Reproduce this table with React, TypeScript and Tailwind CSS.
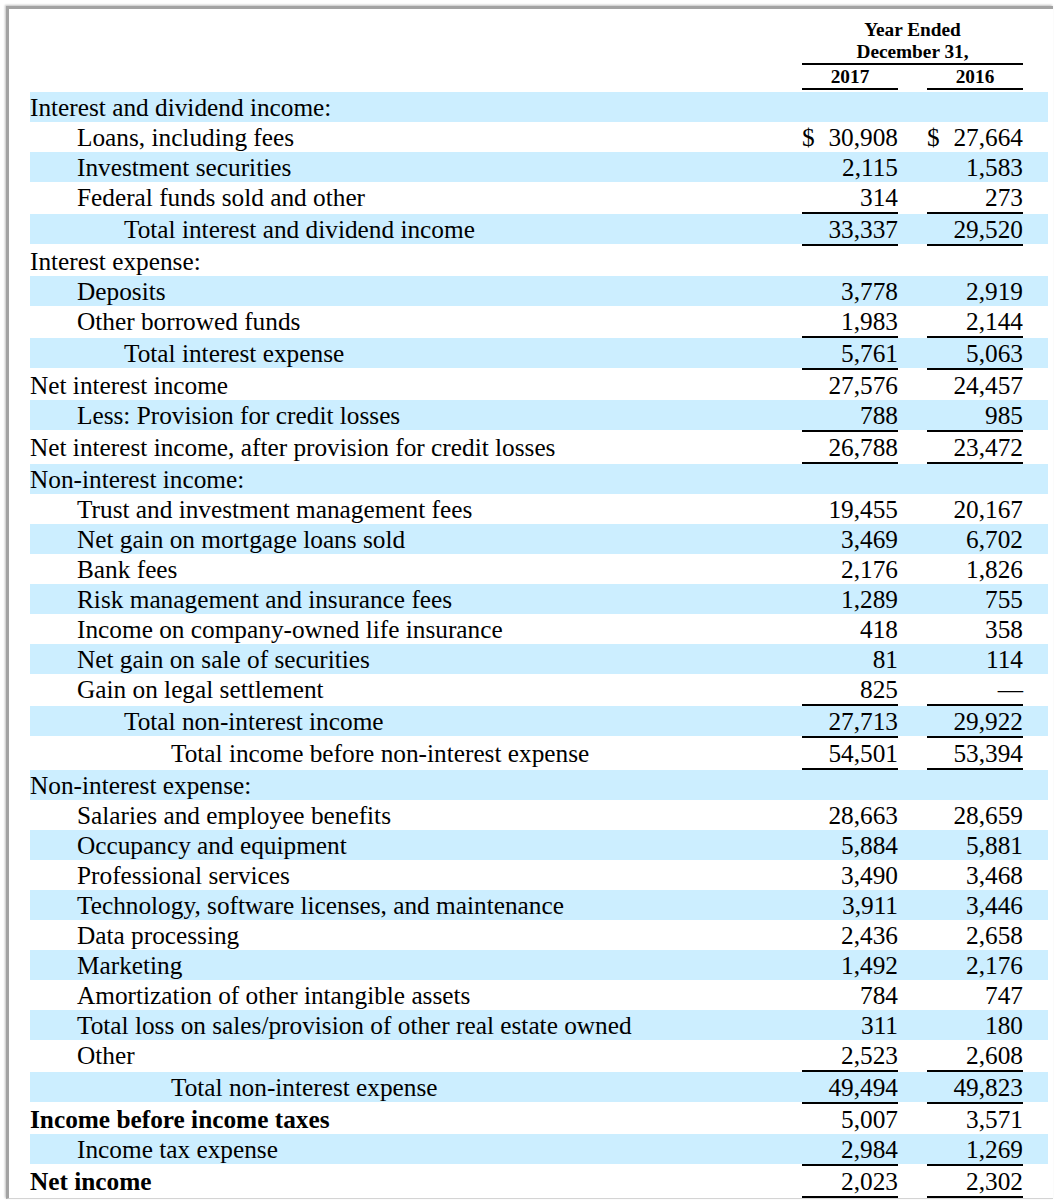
import clsx from "clsx";

type Row = {
  label: string;
  level: 0 | 1 | 2 | 3;
  a?: string;
  b?: string;
  line?: boolean;
  bold?: boolean;
  dollar?: boolean;
};

const ROWS: Row[] = [
  { label: "Interest and dividend income:", level: 0 },
  { label: "Loans, including fees", level: 1, a: "30,908", b: "27,664", dollar: true },
  { label: "Investment securities", level: 1, a: "2,115", b: "1,583" },
  { label: "Federal funds sold and other", level: 1, a: "314", b: "273", line: true },
  { label: "Total interest and dividend income", level: 2, a: "33,337", b: "29,520", line: true },
  { label: "Interest expense:", level: 0 },
  { label: "Deposits", level: 1, a: "3,778", b: "2,919" },
  { label: "Other borrowed funds", level: 1, a: "1,983", b: "2,144", line: true },
  { label: "Total interest expense", level: 2, a: "5,761", b: "5,063", line: true },
  { label: "Net interest income", level: 0, a: "27,576", b: "24,457" },
  { label: "Less: Provision for credit losses", level: 1, a: "788", b: "985", line: true },
  { label: "Net interest income, after provision for credit losses", level: 0, a: "26,788", b: "23,472", line: true },
  { label: "Non-interest income:", level: 0 },
  { label: "Trust and investment management fees", level: 1, a: "19,455", b: "20,167" },
  { label: "Net gain on mortgage loans sold", level: 1, a: "3,469", b: "6,702" },
  { label: "Bank fees", level: 1, a: "2,176", b: "1,826" },
  { label: "Risk management and insurance fees", level: 1, a: "1,289", b: "755" },
  { label: "Income on company-owned life insurance", level: 1, a: "418", b: "358" },
  { label: "Net gain on sale of securities", level: 1, a: "81", b: "114" },
  { label: "Gain on legal settlement", level: 1, a: "825", b: "—", line: true },
  { label: "Total non-interest income", level: 2, a: "27,713", b: "29,922", line: true },
  { label: "Total income before non-interest expense", level: 3, a: "54,501", b: "53,394", line: true },
  { label: "Non-interest expense:", level: 0 },
  { label: "Salaries and employee benefits", level: 1, a: "28,663", b: "28,659" },
  { label: "Occupancy and equipment", level: 1, a: "5,884", b: "5,881" },
  { label: "Professional services", level: 1, a: "3,490", b: "3,468" },
  { label: "Technology, software licenses, and maintenance", level: 1, a: "3,911", b: "3,446" },
  { label: "Data processing", level: 1, a: "2,436", b: "2,658" },
  { label: "Marketing", level: 1, a: "1,492", b: "2,176" },
  { label: "Amortization of other intangible assets", level: 1, a: "784", b: "747" },
  { label: "Total loss on sales/provision of other real estate owned", level: 1, a: "311", b: "180" },
  { label: "Other", level: 1, a: "2,523", b: "2,608", line: true },
  { label: "Total non-interest expense", level: 3, a: "49,494", b: "49,823", line: true },
  { label: "Income before income taxes", level: 0, a: "5,007", b: "3,571", bold: true },
  { label: "Income tax expense", level: 1, a: "2,984", b: "1,269", line: true },
  { label: "Net income", level: 0, a: "2,023", b: "2,302", bold: true, line: true },
];

const INDENT = ["pl-0", "pl-[47px]", "pl-[94px]", "pl-[141px]"];

const Amount = ({ value, dollar }: { value?: string; dollar?: boolean }) => (
  <div className="w-[96px] flex justify-between">
    <span>{dollar ? "$" : ""}</span>
    <span>{value}</span>
  </div>
);

const Rule = () => (
  <div className="flex h-[2px]">
    <div className="flex-1" />
    <div className="w-[96px] bg-black" />
    <div className="w-[29px]" />
    <div className="w-[96px] bg-black" />
    <div className="w-[25px]" />
  </div>
);

export default function App() {
  return (
    <div className="bg-white min-h-screen pl-[6px] pt-[6px] text-black font-['Liberation_Serif','Times_New_Roman',serif]">
      <div className="w-[1047px] border-l-[3px] border-t-[3px] border-b border-[#a3a3a3] border-b-[#d4d4d4] shadow-[-1px_-1px_2px_rgba(0,0,0,0.25)] pl-[21px] pr-[5px]">
        {/* column header */}
        <div className="flex pt-[10px] pb-[2px] text-[19.3px] leading-[22px] font-bold">
          <div className="flex-1" />
          <div className="w-[221px] text-center">
            <div>Year Ended</div>
            <div>December 31,</div>
            <div className="h-[2px] bg-black" />
            <div className="flex justify-between mt-[1px]">
              <div className="w-[96px]">
                <div>2017</div>
                <div className="h-[2px] bg-black" />
              </div>
              <div className="w-[96px]">
                <div>2016</div>
                <div className="h-[2px] bg-black" />
              </div>
            </div>
          </div>
          <div className="w-[25px]" />
        </div>

        {ROWS.map((row, i) => (
          <div key={row.label}>
            <div className={clsx("flex h-[30px] text-[25.3px] leading-[30px] whitespace-nowrap", i % 2 === 0 && "bg-[#cceeff]")}>
              <div className={clsx("flex-1", INDENT[row.level], row.bold && "font-bold")}>{row.label}</div>
              <Amount value={row.a} dollar={row.dollar} />
              <div className="w-[29px]" />
              <Amount value={row.b} dollar={row.dollar} />
              <div className="w-[25px]" />
            </div>
            {row.line && <Rule />}
          </div>
        ))}
      </div>
    </div>
  );
}
